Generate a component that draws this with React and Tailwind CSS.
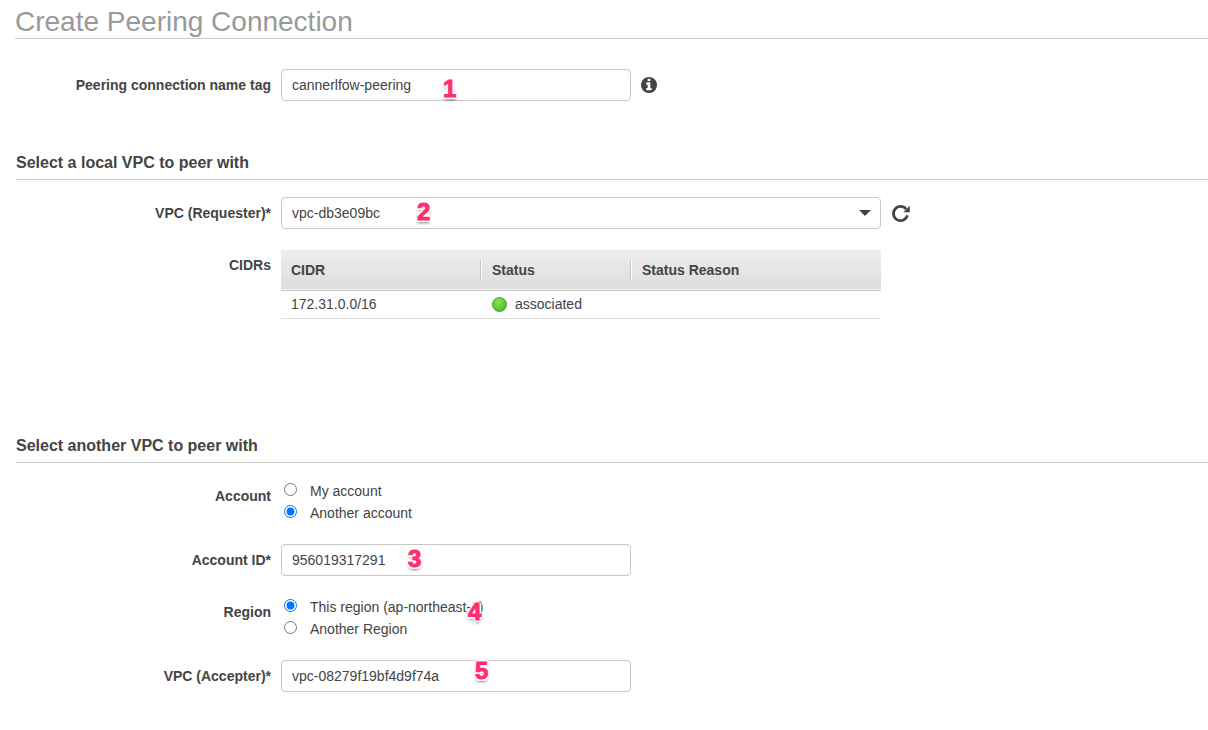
import { useState } from "react";

const controlClass =
  "h-8 w-full rounded border border-[#c8c8c8] bg-white px-[10px] text-sm text-[#444444] outline-none focus:border-[#7a9cc6]";

const markerClass =
  "pointer-events-none absolute text-2xl leading-6 font-bold text-[#ff2e6e] [-webkit-text-stroke:1px_#ff2e6e] [text-shadow:-2px_0_0_#fff,2px_0_0_#fff,0_-2px_0_#fff,0_2px_0_#fff,-1px_-1px_0_#fff,1px_-1px_0_#fff,-1px_2px_0_#fff,1px_2px_0_#fff,0_3px_3px_rgba(0,0,0,0.5)]";

function Marker({ n, className }) {
  return (
    <span aria-hidden="true" className={`${markerClass} ${className}`}>
      {n}
    </span>
  );
}

function Row({ label, htmlFor, id, children }) {
  const cls = "w-[255px] shrink-0 text-right text-sm leading-8 font-bold";
  return (
    <div className="flex items-start gap-[10px]">
      {htmlFor ? (
        <label htmlFor={htmlFor} className={cls}>
          {label}
        </label>
      ) : (
        <span id={id} className={cls}>
          {label}
        </span>
      )}
      {children}
    </div>
  );
}

function SectionTitle({ children }) {
  return (
    <h2 className="border-b border-[#c8c8c8] pb-1 text-base leading-6 font-bold">
      {children}
    </h2>
  );
}

function Radio({ name, value, checked, onChange, children }) {
  return (
    <label className="flex h-[22px] items-center gap-[13px] pl-[3px] text-sm">
      <input
        type="radio"
        name={name}
        value={value}
        checked={checked}
        onChange={() => onChange(value)}
        className="mb-[3px] size-[13px]"
      />
      {children}
    </label>
  );
}

function InfoIcon() {
  return (
    <svg viewBox="0 0 1536 1536" className="size-4" fill="currentColor">
      <path d="M1024 1248v-160q0-14-9-23t-23-9h-96V544q0-14-9-23t-23-9H544q-14 0-23 9t-9 23v160q0 14 9 23t23 9h96v320h-96q-14 0-23 9t-9 23v160q0 14 9 23t23 9h448q14 0 23-9t9-23zM896 352V192q0-14-9-23t-23-9H672q-14 0-23 9t-9 23v160q0 14 9 23t23 9h192q14 0 23-9t9-23zm640 416q0 209-103 385.500T1153.500 1433 768 1536t-385.500-103T103 1153.500 0 768t103-385.500T382.500 103 768 0t385.500 103T1433 382.500 1536 768z" />
    </svg>
  );
}

function RefreshIcon() {
  return (
    <svg viewBox="0 0 20 20" className="size-5" fill="none">
      <path
        d="M15.100 6.100A7.100 7.100 0 1 0 16.400 12.400"
        stroke="currentColor"
        strokeWidth="2.700"
      />
      <path d="M18.800 2.800V9.200H12.400Z" fill="currentColor" />
    </svg>
  );
}

export default function App() {
  const [name, setName] = useState("cannerlfow-peering");
  const [account, setAccount] = useState("another");
  const [accountId, setAccountId] = useState("956019317291");
  const [region, setRegion] = useState("this");
  const [accepter, setAccepter] = useState("vpc-08279f19bf4d9f74a");

  return (
    <main className="min-h-screen bg-white pb-8 pl-[15px] font-['Liberation_Sans',Arial,sans-serif] text-sm text-[#444444]">
      <h1 className="border-b border-[#c8c8c8] pt-[6px] text-[28px] leading-8 text-[#999999]">
        Create Peering Connection
      </h1>

      <form className="pl-px" onSubmit={(e) => e.preventDefault()}>
        <div className="pt-[30px]">
          <Row label="Peering connection name tag" htmlFor="name-tag">
            <div className="relative w-[350px]">
              <input
                id="name-tag"
                type="text"
                value={name}
                onChange={(e) => setName(e.target.value)}
                className={controlClass}
              />
              <Marker n="1" className="top-2 left-[162px]" />
            </div>
            <button type="button" aria-label="Info" className="flex h-8 items-center">
              <InfoIcon />
            </button>
          </Row>
        </div>

        <section className="pt-[50px]">
          <SectionTitle>Select a local VPC to peer with</SectionTitle>
          <div className="flex flex-col gap-5 pt-[17px]">
            <Row label="VPC (Requester)*" htmlFor="requester">
              <div className="relative w-[600px]">
                <select id="requester" className={`${controlClass} appearance-none`}>
                  <option>vpc-db3e09bc</option>
                </select>
                <svg
                  viewBox="0 0 12 6"
                  className="pointer-events-none absolute top-[13px] right-[10px] h-[6px] w-3"
                  fill="currentColor"
                >
                  <path d="M0 0H12L6 6Z" />
                </svg>
                <Marker n="2" className="top-[3px] left-[136px]" />
              </div>
              <button type="button" aria-label="Refresh" className="flex h-8 items-center">
                <RefreshIcon />
              </button>
            </Row>

            <Row label="CIDRs" id="cidrs-label">
              <table
                aria-labelledby="cidrs-label"
                className="mt-px w-[600px] table-fixed border-collapse text-left"
              >
                <thead>
                  <tr className="h-10 border-b border-[#c8c8c8] bg-linear-to-b from-[#eeeeee] to-[#dddddd]">
                    <th className="w-[199px] p-0 pl-[10px]">CIDR</th>
                    <th className="w-[150px] p-0">
                      <div className="flex h-5 items-center border-l border-[#c4c4c4] pl-[11px] shadow-[inset_1px_0_0_#fff]">
                        Status
                      </div>
                    </th>
                    <th className="p-0">
                      <div className="flex h-5 items-center border-l border-[#c4c4c4] pl-[11px] shadow-[inset_1px_0_0_#fff]">
                        Status Reason
                      </div>
                    </th>
                  </tr>
                </thead>
                <tbody>
                  <tr className="h-7 border-b border-[#dddddd]">
                    <td className="p-0 pl-[10px]">172.31.0.0/16</td>
                    <td className="p-0 pl-3">
                      <div className="flex items-center gap-2">
                        <span className="size-[15px] rounded-full border border-[#4aa82c] bg-radial-[at_40%_30%] from-[#8ae05c] to-[#35b81c]" />
                        associated
                      </div>
                    </td>
                    <td className="p-0" />
                  </tr>
                </tbody>
              </table>
            </Row>
          </div>
        </section>

        <section className="pt-[115px]">
          <SectionTitle>Select another VPC to peer with</SectionTitle>
          <div className="flex flex-col gap-5 pt-[17px]">
            <Row label="Account" id="account-label">
              <div role="radiogroup" aria-labelledby="account-label">
                <Radio name="account" value="mine" checked={account === "mine"} onChange={setAccount}>
                  My account
                </Radio>
                <Radio name="account" value="another" checked={account === "another"} onChange={setAccount}>
                  Another account
                </Radio>
              </div>
            </Row>

            <Row label="Account ID*" htmlFor="account-id">
              <div className="relative w-[350px]">
                <input
                  id="account-id"
                  type="text"
                  value={accountId}
                  onChange={(e) => setAccountId(e.target.value)}
                  className={controlClass}
                />
                <Marker n="3" className="top-[3px] left-[127px]" />
              </div>
            </Row>

            <Row label="Region" id="region-label">
              <div role="radiogroup" aria-labelledby="region-label" className="relative">
                <Radio name="region" value="this" checked={region === "this"} onChange={setRegion}>
                  This region (ap-northeast-1)
                </Radio>
                <Radio name="region" value="other" checked={region === "other"} onChange={setRegion}>
                  Another Region
                </Radio>
                <Marker n="4" className="top-1 left-[187px]" />
              </div>
            </Row>

            <Row label="VPC (Accepter)*" htmlFor="accepter">
              <div className="relative w-[350px]">
                <input
                  id="accepter"
                  type="text"
                  value={accepter}
                  onChange={(e) => setAccepter(e.target.value)}
                  className={controlClass}
                />
                <Marker n="5" className="-top-px left-[194px]" />
              </div>
            </Row>
          </div>
        </section>
      </form>
    </main>
  );
}
